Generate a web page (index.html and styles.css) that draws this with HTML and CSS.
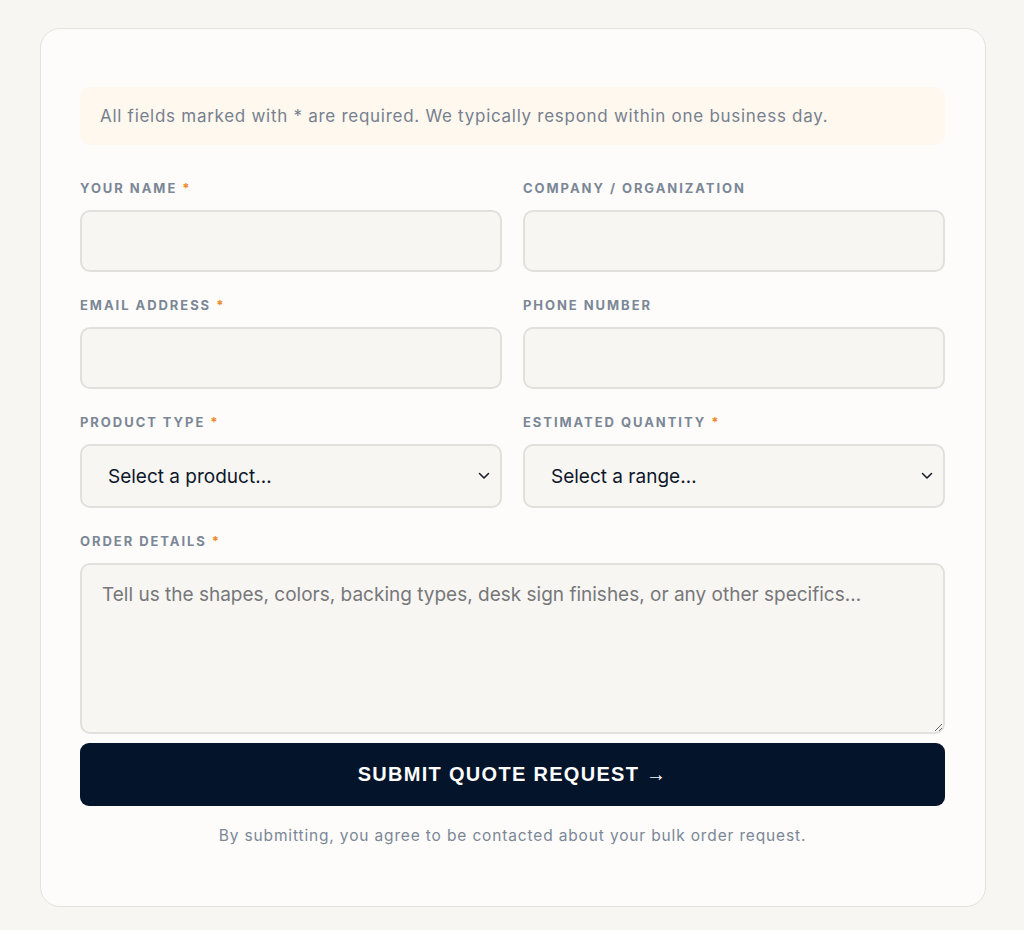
FILE: index.html
```html
<!DOCTYPE html>
<html lang="en">
<head>
    <meta charset="UTF-8">
    <meta name="viewport" content="width=device-width, initial-scale=1.0">
    <title>Request a Bulk Quote</title>
    <link rel="stylesheet" href="styles.css">
</head>
<body>
    <div class="card">
        <form class="quote-form" onsubmit="event.preventDefault()">
            <div class="notice">All fields marked with * are required. We typically respond within one business day.</div>
            <div class="grid">
                <div class="field">
                    <label for="name">Your Name <span class="req">*</span></label>
                    <input type="text" id="name" name="name">
                </div>
                <div class="field">
                    <label for="company">Company / Organization</label>
                    <input type="text" id="company" name="company">
                </div>
                <div class="field">
                    <label for="email">Email Address <span class="req">*</span></label>
                    <input type="email" id="email" name="email">
                </div>
                <div class="field">
                    <label for="phone">Phone Number</label>
                    <input type="tel" id="phone" name="phone">
                </div>
                <div class="field">
                    <label for="product">Product Type <span class="req">*</span></label>
                    <div class="select-wrap">
                        <select id="product" name="product">
                            <option>Select a product…</option>
                            <option>Patches</option>
                            <option>Desk Signs</option>
                        </select>
                        <svg class="chevron" width="12" height="8" viewBox="0 0 12 8"><path d="M1.5 1.5 6 6l4.5-4.5" fill="none" stroke="#1a1f2b" stroke-width="1.6" stroke-linecap="round" stroke-linejoin="round"/></svg>
                    </div>
                </div>
                <div class="field">
                    <label for="qty">Estimated Quantity <span class="req">*</span></label>
                    <div class="select-wrap">
                        <select id="qty" name="qty">
                            <option>Select a range…</option>
                            <option>50 - 100</option>
                            <option>100 - 500</option>
                        </select>
                        <svg class="chevron" width="12" height="8" viewBox="0 0 12 8"><path d="M1.5 1.5 6 6l4.5-4.5" fill="none" stroke="#1a1f2b" stroke-width="1.6" stroke-linecap="round" stroke-linejoin="round"/></svg>
                    </div>
                </div>
                <div class="field wide">
                    <label for="details">Order Details <span class="req">*</span></label>
                    <textarea id="details" name="details" placeholder="Tell us the shapes, colors, backing types, desk sign finishes, or any other specifics…"></textarea>
                </div>
            </div>
            <button type="submit">Submit Quote Request &rarr;</button>
            <p class="fine-print">By submitting, you agree to be contacted about your bulk order request.</p>
        </form>
    </div>
</body>
</html>
```

FILE: styles.css
```css
* {
    box-sizing: border-box;
}
body {
    font-family: Inter, "Open Sans", sans-serif;
    background-color: #f7f6f2;
    margin: 0;
    padding: 28px 38px 24px 40px;
}
.card {
    background: #fdfcfb;
    border: 1px solid #e4e2de;
    border-radius: 20px;
    padding: 58px 40px 61px 39px;
}
.notice {
    background: #fff8ee;
    border-radius: 10px;
    padding: 0 20px;
    height: 58px;
    line-height: 58px;
    font-size: 17px;
    letter-spacing: 0.72px;
    color: #76808e;
    margin-bottom: 35px;
}
.grid {
    display: grid;
    grid-template-columns: 1fr 1fr;
    column-gap: 21px;
    row-gap: 25px;
}
.field.wide {
    grid-column: span 2;
}
label {
    display: block;
    font-size: 13px;
    font-weight: 700;
    letter-spacing: 1.95px;
    text-transform: uppercase;
    color: #7b8796;
    line-height: 16px;
    margin-bottom: 14px;
}
.req {
    color: #ec8a2a;
}
input, select, textarea {
    width: 100%;
    display: block;
    background: #f7f6f3;
    border: 2px solid #e2e0dc;
    border-radius: 10px;
    font-family: inherit;
    color: #0f172a;
    outline: none;
}
input {
    height: 62px;
    padding: 0 20px;
    font-size: 18px;
}
.select-wrap {
    position: relative;
}
select {
    appearance: none;
    -webkit-appearance: none;
    height: 64px;
    padding: 0 40px 0 26px;
    font-size: 19px;
}
.chevron {
    position: absolute;
    right: 12px;
    top: 28px;
    pointer-events: none;
}
textarea {
    height: 171px;
    padding: 17px 20px;
    font-size: 19px;
    line-height: 26px;
    resize: vertical;
}
textarea::placeholder {
    color: #77777a;
}
button {
    display: block;
    width: 100%;
    height: 63px;
    margin-top: 9px;
    background: #03142b;
    color: #fff;
    border: none;
    border-radius: 9px;
    font-family: "Liberation Sans", Arial, sans-serif;
    font-size: 20px;
    font-weight: 700;
    letter-spacing: 1.3px;
    text-transform: uppercase;
    cursor: pointer;
}
.fine-print {
    text-align: center;
    font-size: 15.5px;
    color: #7b8796;
    margin: 20px 0 0;
    letter-spacing: 0.85px;
}
```
